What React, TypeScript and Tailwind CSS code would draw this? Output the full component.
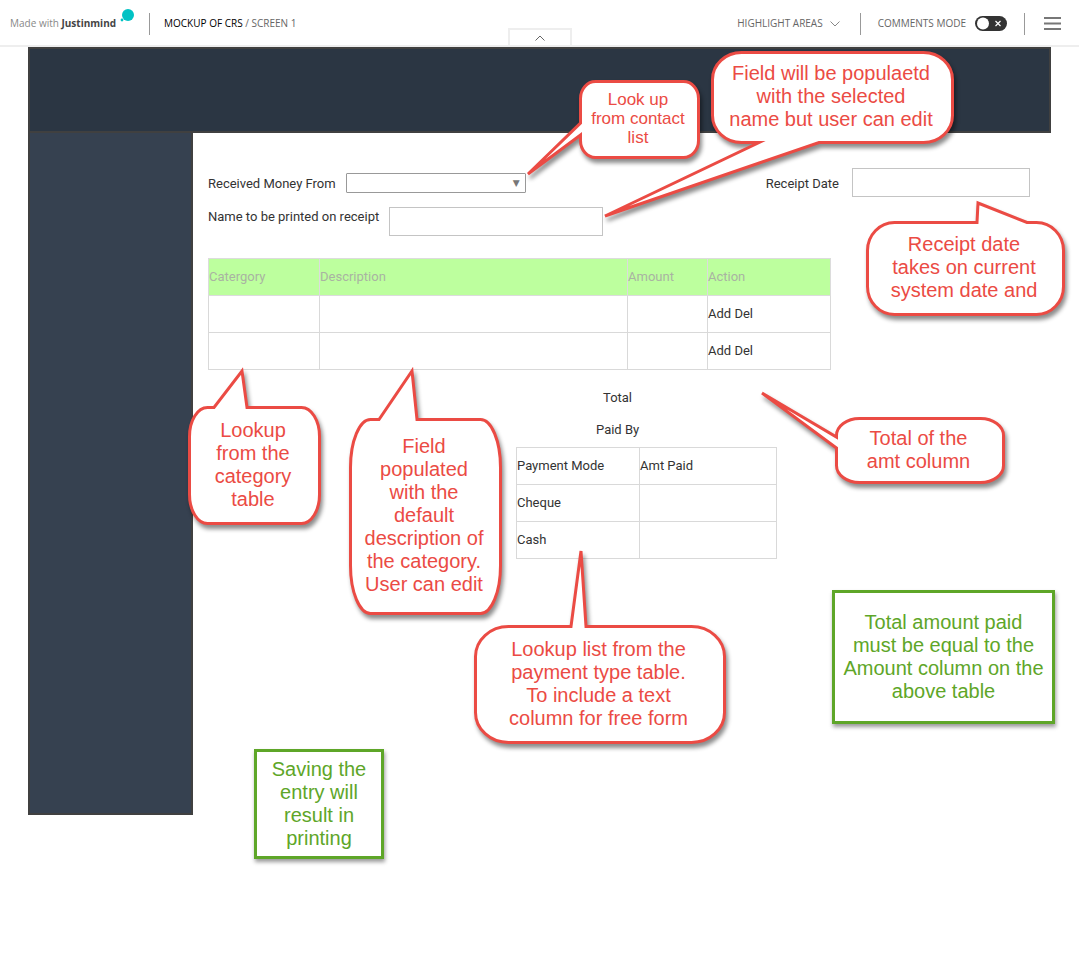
import type { ReactNode } from "react";

type Point = [number, number];

type Tail = {
  side: "top" | "bottom" | "left";
  from: number;
  to: number;
  tip: Point;
};

type CalloutProps = {
  place: string;
  width: number;
  height: number;
  rx: number;
  ry: number;
  tail: Tail;
  lines: string[];
  small?: boolean;
};

const RED = "#eb4b44";

function outline(width: number, height: number, rx: number, ry: number, tail: Tail) {
  const l = 1.5;
  const t = 1.5;
  const r = width - 1.5;
  const b = height - 1.5;
  const [tx, ty] = tail.tip;
  const top = tail.side === "top" ? `H${tail.from} L${tx} ${ty} L${tail.to} ${t}` : "";
  const bottom = tail.side === "bottom" ? `H${tail.to} L${tx} ${ty} L${tail.from} ${b}` : "";
  const left = tail.side === "left" ? `V${tail.to} L${tx} ${ty} L${l} ${tail.from}` : "";
  return [
    `M${l + rx} ${t}`,
    top,
    `H${r - rx} A${rx} ${ry} 0 0 1 ${r} ${t + ry}`,
    `V${b - ry} A${rx} ${ry} 0 0 1 ${r - rx} ${b}`,
    bottom,
    `H${l + rx} A${rx} ${ry} 0 0 1 ${l} ${b - ry}`,
    left,
    `V${t + ry} A${rx} ${ry} 0 0 1 ${l + rx} ${t} Z`,
  ].join(" ");
}

function Callout({ place, width, height, rx, ry, tail, lines, small }: CalloutProps) {
  return (
    <div className={`absolute flex items-center justify-center pr-[3px] pb-[2px] ${place}`}>
      <svg
        className="absolute inset-0 size-full overflow-visible drop-shadow-[2px_4px_2px_rgba(0,0,0,0.45)]"
        aria-hidden="true"
      >
        <path
          d={outline(width, height, rx, ry, tail)}
          fill="#fff"
          stroke={RED}
          strokeWidth="3"
          strokeLinejoin="miter"
          strokeMiterlimit="6"
        />
      </svg>
      <p
        className={`relative text-center whitespace-nowrap text-[#eb4b44] ${
          small ? "text-[17px] leading-[19px]" : "text-[20px] leading-[23px]"
        }`}
      >
        {lines.map((line) => (
          <span key={line} className="block">
            {line}
          </span>
        ))}
      </p>
    </div>
  );
}

function Note({ place, lines }: { place: string; lines: string[] }) {
  return (
    <div
      className={`absolute flex items-center justify-center border-3 border-[#5ea628] bg-white shadow-[1px_3px_4px_rgba(0,0,0,0.4)] ${place}`}
    >
      <p className="text-center text-[20px] leading-[23px] whitespace-nowrap text-[#5ea628]">
        {lines.map((line) => (
          <span key={line} className="block">
            {line}
          </span>
        ))}
      </p>
    </div>
  );
}

function Divider() {
  return <span className="h-[22px] w-px bg-[#999]" />;
}

function Header() {
  return (
    <header className="flex h-[47px] border-b-2 border-[#eee] bg-white font-['Open_Sans',sans-serif] text-[10px] text-[#666]">
      <div className="flex flex-1 items-center pt-[2px]">
        <a href="#home" className="ml-[10px] flex items-center gap-[3px] text-[#888]">
          <span>
            Made with <span className="font-bold text-[#444]">Justinmind</span>
          </span>
          <svg className="mb-[14px] h-4 w-4" viewBox="0 0 16 16" fill="#00c2c4" aria-hidden="true">
            <circle cx="9" cy="6" r="6" />
            <circle cx="3" cy="11" r="1.4" />
          </svg>
        </a>
        <div className="flex items-center gap-[14px] pl-[14px]">
          <Divider />
          <span>
            <span className="text-black">MOCKUP OF CRS</span> / SCREEN 1
          </span>
        </div>
      </div>
      <button
        type="button"
        aria-label="Collapse toolbar"
        className="flex h-[17px] w-16 items-center justify-center self-end border-2 border-b-0 border-[#eee]"
      >
        <svg className="h-[6px] w-[10px]" viewBox="0 0 10 6" fill="none" stroke="#666" aria-hidden="true">
          <path d="M0.5 5.5 L5 1 L9.5 5.5" />
        </svg>
      </button>
      <div className="flex flex-1 items-center justify-end pt-[2px]">
        <button type="button" className="mr-5 flex items-center gap-[7px]">
          HIGHLIGHT AREAS
          <svg className="h-[6px] w-[10px]" viewBox="0 0 10 6" fill="none" stroke="#888" aria-hidden="true">
            <path d="M0.5 0.5 L5 5 L9.5 0.5" />
          </svg>
        </button>
        <Divider />
        <label className="mr-[17px] ml-[17px] flex items-center gap-[9px]">
          COMMENTS MODE
          <span className="relative flex">
            <input
              type="checkbox"
              role="switch"
              className="h-[15px] w-8 appearance-none rounded-full bg-[#333]"
            />
            <svg className="pointer-events-none absolute inset-0" viewBox="0 0 32 15" aria-hidden="true">
              <circle cx="8" cy="7.5" r="6" fill="#fff" />
              <path d="M20.5 5 L25.5 10 M25.5 5 L20.5 10" stroke="#fff" strokeWidth="1.2" />
            </svg>
          </span>
        </label>
        <Divider />
        <button type="button" aria-label="Menu" className="mr-[18px] ml-[19px]">
          <svg className="h-[13px] w-[17px]" viewBox="0 0 17 13" fill="#777" aria-hidden="true">
            <rect width="17" height="2" />
            <rect y="5.5" width="17" height="2" />
            <rect y="11" width="17" height="2" />
          </svg>
        </button>
      </div>
    </header>
  );
}

function Cell({ children }: { children?: ReactNode }) {
  return <td className="h-[37px] border border-[#d9d9d9] p-0">{children}</td>;
}

function ReceiptForm() {
  return (
    <form className="min-w-0 flex-1 pt-[35px] pl-[15px]">
      <div className="flex items-center justify-between pr-[21px]">
        <div className="flex items-center gap-[10px]">
          <label htmlFor="payer" className="pt-[2px]">
            Received Money From
          </label>
          <span className="relative flex">
            <select
              id="payer"
              className="h-5 w-[180px] appearance-none rounded-[1px] border border-[#999] bg-white"
            />
            <span className="pointer-events-none absolute top-1 right-[6px] font-['DejaVu_Sans',sans-serif] text-[9px] leading-3 text-[#777]">
              ▼
            </span>
          </span>
        </div>
        <div className="flex items-center gap-[13px]">
          <label htmlFor="receipt-date" className="pt-[2px]">
            Receipt Date
          </label>
          <input id="receipt-date" type="text" className="h-[29px] w-[178px] border border-[#c4c4c4] px-1" />
        </div>
      </div>

      <div className="mt-[10px] flex gap-[10px]">
        <label htmlFor="printed-name">Name to be printed on receipt</label>
        <input id="printed-name" type="text" className="h-[29px] w-[214px] border border-[#c4c4c4] px-1" />
      </div>

      <table className="mt-[22px] w-[623px] table-fixed border-collapse">
        <colgroup>
          <col className="w-[111px]" />
          <col className="w-[308px]" />
          <col className="w-[80px]" />
          <col />
        </colgroup>
        <thead>
          <tr className="bg-[#bdff9e] text-left text-[#a9b3a2]">
            {["Catergory", "Description", "Amount", "Action"].map((title) => (
              <th key={title} className="h-[37px] border border-[#dcdcdc] p-0 font-normal">
                {title}
              </th>
            ))}
          </tr>
        </thead>
        <tbody>
          {[1, 2].map((row) => (
            <tr key={row}>
              <Cell />
              <Cell />
              <Cell />
              <Cell>
                <button type="button">Add</button> <button type="button">Del</button>
              </Cell>
            </tr>
          ))}
        </tbody>
      </table>

      <p className="mt-[18px] pl-[395px]">Total</p>
      <p className="mt-[12px] pl-[388px]">Paid By</p>

      <table className="mt-[7px] ml-[308px] w-[261px] table-fixed border-collapse">
        <colgroup>
          <col className="w-[123px]" />
          <col />
        </colgroup>
        <tbody>
          <tr className="text-left">
            <th className="h-[37px] border border-[#d9d9d9] p-0 font-normal">Payment Mode</th>
            <th className="h-[37px] border border-[#d9d9d9] p-0 font-normal">Amt Paid</th>
          </tr>
          {["Cheque", "Cash"].map((mode) => (
            <tr key={mode}>
              <Cell>{mode}</Cell>
              <Cell />
            </tr>
          ))}
        </tbody>
      </table>
    </form>
  );
}

export default function App() {
  return (
    <div className="relative min-h-screen bg-white font-['Liberation_Sans',Arial,sans-serif]">
      <Header />
      <main className="px-7 font-[Roboto,sans-serif] text-[13px] leading-5 text-[#333]">
        <div className="h-[86px] border-2 border-[#404040] bg-[#2b3643]" />
        <div className="flex items-start">
          <aside className="h-[682px] w-[165px] border-2 border-t-0 border-[#404040] bg-[#364150]" />
          <ReceiptForm />
        </div>
      </main>

      <Callout
        place="left-[579px] top-[80px] h-[79px] w-[121px]"
        width={121}
        height={79}
        rx={15}
        ry={17}
        tail={{ side: "left", from: 43, to: 55, tip: [-51, 94] }}
        lines={["Look up", "from contact", "list"]}
        small
      />
      <Callout
        place="left-[711px] top-[51px] h-[93px] w-[243px]"
        width={243}
        height={93}
        rx={29}
        ry={27}
        tail={{ side: "bottom", from: 48, to: 108, tip: [-106, 165] }}
        lines={["Field will be populaetd", "with the selected", "name but user can edit"]}
      />
      <Callout
        place="left-[866px] top-[221px] h-[95px] w-[199px]"
        width={199}
        height={95}
        rx={27}
        ry={28}
        tail={{ side: "top", from: 111, to: 161, tip: [112, -18] }}
        lines={["Receipt date", "takes on current", "system date and"]}
      />
      <Callout
        place="left-[188px] top-[406px] h-[119px] w-[133px]"
        width={133}
        height={119}
        rx={18}
        ry={29}
        tail={{ side: "top", from: 26, to: 59, tip: [54, -35] }}
        lines={["Lookup", "from the", "category", "table"]}
      />
      <Callout
        place="left-[349px] top-[418px] h-[197px] w-[153px]"
        width={153}
        height={197}
        rx={20}
        ry={48}
        tail={{ side: "top", from: 30, to: 68, tip: [63, -47] }}
        lines={["Field", "populated", "with the", "default", "description of", "the category.", "User can edit"]}
      />
      <Callout
        place="left-[474px] top-[625px] h-[119px] w-[252px]"
        width={252}
        height={119}
        rx={33}
        ry={30}
        tail={{ side: "top", from: 97, to: 112, tip: [107, -74] }}
        lines={["Lookup list from the", "payment type table.", "To include a text", "column for free form"]}
      />
      <Callout
        place="left-[835px] top-[417px] h-[67px] w-[170px]"
        width={170}
        height={67}
        rx={23}
        ry={17}
        tail={{ side: "left", from: 20, to: 31, tip: [-73, -24] }}
        lines={["Total of the", "amt column"]}
      />

      <Note
        place="left-[832px] top-[590px] h-[134px] w-[223px]"
        lines={["Total amount paid", "must be equal to the", "Amount column on the", "above table"]}
      />
      <Note
        place="left-[254px] top-[749px] h-[110px] w-[130px]"
        lines={["Saving the", "entry will", "result in", "printing"]}
      />
    </div>
  );
}
